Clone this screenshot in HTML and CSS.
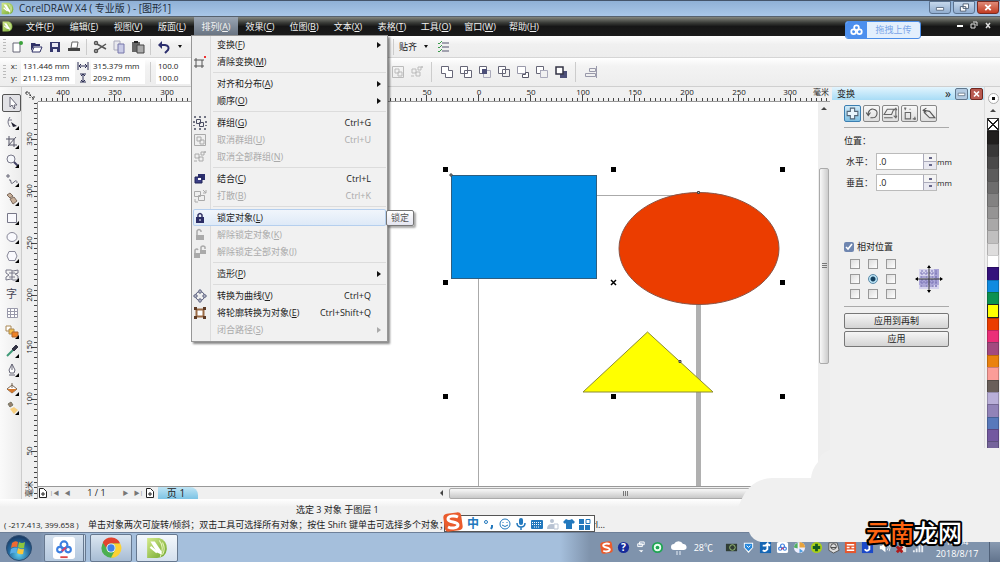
FILE: index.html
```
<!DOCTYPE html>
<html lang="zh-CN">
<head>
<meta charset="utf-8">
<title>CorelDRAW X4 - [图形1]</title>
<link rel="stylesheet" href="styles.css">
</head>
<body>
<svg class="defs" aria-hidden="true">
  <defs>
    <linearGradient id="leaf" x1="0" y1="0" x2="1" y2="1"><stop offset="0" stop-color="#d4ea8c"/><stop offset="1" stop-color="#6fa52a"/></linearGradient>
    <radialGradient id="orb" cx=".5" cy=".75" r=".7"><stop offset="0" stop-color="#5fd0f0"/><stop offset=".6" stop-color="#23679c"/><stop offset="1" stop-color="#1b3c66"/></radialGradient>
    <symbol id="i-group" viewBox="0 0 14 14"><path d="M1 1h2M6 1h2M11 1h2M1 13h2M6 13h2M11 13h2M1 5v2M13 5v2M1 9v1M13 9v1" stroke="currentColor" stroke-width="1.500" fill="none"/><path d="M3.500 3.500h4v4h-4zM6.500 6.500h4v4h-4z" fill="none" stroke="currentColor"/></symbol>
    <symbol id="i-ungroup" viewBox="0 0 14 14"><path d="M1.500 1.500h11v11h-11zM4 4h4v4H4zM7 7h4v4H7z" fill="none" stroke="currentColor"/></symbol>
    <symbol id="i-ungroupall" viewBox="0 0 14 14"><path d="M2 4h4v4H2zM6 7h4v4H6zM8 2h3v3H8zM12 1v2M13 2h-2M1 11h3" fill="none" stroke="currentColor"/></symbol>
    <symbol id="i-baidu" viewBox="0 0 24 24"><g fill="none" stroke-width="3"><circle cx="12" cy="8" r="5" stroke="#3b7fe0"/><circle cx="6" cy="15" r="4" stroke="#3b7fe0"/><circle cx="18" cy="15" r="4" stroke="#3b7fe0"/><path d="M9 17l6-5" stroke="#d9406a"/></g></symbol>
    <symbol id="i-sogou" viewBox="0 0 20 20"><rect x="1" y="1" width="18" height="18" rx="4" fill="#ea5b2c" transform="rotate(-8 10 10)"/><path d="M15 5C11 3 5 4 5 7c0 4 10 2 10 6 0 3-6 4-10 2" fill="none" stroke="#fff" stroke-width="3"/></symbol>
    <symbol id="i-cdr" viewBox="0 0 20 20"><path d="M1 1h11q7 2 7 10-1 8-9 8H1z" fill="url(#leaf)"/><path d="M12 3q5 6 1 15M15 5q3 6 0 11" fill="none" stroke="#e4f3b8"/><path d="M4 4l4 0 6 9v3l-4-2z" fill="#fff"/><path d="M4 9l6 5" stroke="#fff" stroke-width="2"/></symbol>
  </defs>
</svg>
<div class="app">
  <header class="titlebar">
    <svg class="ic13" viewBox="0 0 20 20"><use href="#i-cdr"/></svg>
    <h1>CorelDRAW X4 ( 专业版 ) - [图形1]</h1>
    <div class="winbtns">
      <button aria-label="最小化"><svg viewBox="0 0 22 12"><path d="M7 6h8v3H7z" fill="#fff" stroke="#5a6b80"/></svg></button>
      <button aria-label="还原"><svg viewBox="0 0 22 12"><path d="M10 2h6v5h-6zM7 5h6v5H7z" fill="#fff" stroke="#4a5b70"/></svg></button>
      <button class="close" aria-label="关闭"><svg viewBox="0 0 22 12"><path d="M8 3l6 6M14 3l-6 6" stroke="#fff" stroke-width="2"/></svg></button>
    </div>
  </header>
  <nav class="menubar">
    <svg class="docicon" viewBox="0 0 20 20"><use href="#i-cdr"/></svg>
    <button>文件(<u>F</u>)</button><button>编辑(<u>E</u>)</button><button>视图(<u>V</u>)</button><button>版面(<u>L</u>)</button>
    <div class="open">
      <button class="active">排列(<u>A</u>)</button>
      <div class="menu" role="menu">
        <button><i></i><span>变换(<u>F</u>)</span><b></b></button>
        <button><i><svg class="ic14" viewBox="0 0 14 14"><path d="M3 5h6v6H3zM1 5h2M9 5h2M3 3v2M3 11v2M9 11v2M1 11h2M9 11h2" fill="none" stroke="#555"/><path d="M11 1l2 2M13 1l-2 2" stroke="#e33"/></svg></i><span>清除变换(<u>M</u>)</span></button>
        <hr>
        <button><i></i><span>对齐和分布(<u>A</u>)</span><b></b></button>
        <button><i></i><span>顺序(<u>O</u>)</span><b></b></button>
        <hr>
        <button><i><svg class="ic14"><use href="#i-group"/></svg></i><span>群组(<u>G</u>)</span><kbd>Ctrl+G</kbd></button>
        <button disabled><i><svg class="ic14"><use href="#i-ungroup"/></svg></i><span>取消群组(<u>U</u>)</span><kbd>Ctrl+U</kbd></button>
        <button disabled><i><svg class="ic14"><use href="#i-ungroupall"/></svg></i><span>取消全部群组(<u>N</u>)</span></button>
        <hr>
        <button><i><svg class="ic14" viewBox="0 0 14 14"><path d="M5 2h7v6H5z" fill="#2c2f6e"/><path d="M2 5h7v6H2z" fill="#3b3f86" stroke="#202458"/><path d="M5 6h3v2H5z" fill="#fff"/></svg></i><span>结合(<u>C</u>)</span><kbd>Ctrl+L</kbd></button>
        <button disabled><i><svg class="ic14" viewBox="0 0 14 14"><path d="M1.500 2.500h6v5h-6zM5.500 6.500h6v5h-6zM10 1l3 3M13 1v3h-3M2 10v3h3" fill="none" stroke="currentColor"/></svg></i><span>打散(<u>B</u>)</span><kbd>Ctrl+K</kbd></button>
        <hr>
        <button class="hot"><i><svg class="ic14" viewBox="0 0 14 14"><path d="M5 7V4q2-3 4 0v3" fill="none" stroke="#333366" stroke-width="1.500"/><path d="M3 6h8v6H3z" fill="#2b2d66"/><path d="M7 8v2" stroke="#fff"/></svg></i><span>锁定对象(<u>L</u>)</span></button>
        <button disabled><i><svg class="ic14" viewBox="0 0 14 14"><path d="M4 7V3q2-3 4 0v1" fill="none" stroke="currentColor" stroke-width="1.500"/><path d="M3 7h8v5H3z" fill="currentColor"/></svg></i><span>解除锁定对象(<u>K</u>)</span></button>
        <button disabled><i><svg class="ic14" viewBox="0 0 14 14"><path d="M2 8V5q2-2 3 0M8 5V2q2-2 4 0v2" fill="none" stroke="currentColor" stroke-width="1.500"/><path d="M1 8h6v5H1zM7 5h6v4H7z" fill="currentColor"/></svg></i><span>解除锁定全部对象(<u>J</u>)</span></button>
        <hr>
        <button><i></i><span>造形(<u>P</u>)</span><b></b></button>
        <hr>
        <button><i><svg class="ic14" viewBox="0 0 14 14"><circle cx="7" cy="7" r="4.500" fill="none" stroke="#555a7a"/><path d="M6 1h2v3H6zM6 10h2v3H6zM1 6h3v2H1zM10 6h3v2h-3z" fill="#fff" stroke="#555a7a"/></svg></i><span>转换为曲线(<u>V</u>)</span><kbd>Ctrl+Q</kbd></button>
        <button><i><svg class="ic14" viewBox="0 0 14 14"><path d="M3.500 3.500h7v7h-7z" fill="#fff" stroke="#9a6a45" stroke-width="2"/><path d="M1 1h3v3H1zM10 1h3v3h-3zM1 10h3v3H1zM10 10h3v3h-3z" fill="#5d3b25"/></svg></i><span>将轮廓转换为对象(<u>E</u>)</span><kbd>Ctrl+Shift+Q</kbd></button>
        <button disabled><i></i><span>闭合路径(<u>S</u>)</span><b></b></button>
        <div class="tip" role="tooltip">锁定</div>
      </div>
    </div>
    <button>效果(<u>C</u>)</button><button>位图(<u>B</u>)</button><button>文本(<u>X</u>)</button><button>表格(<u>T</u>)</button><button>工具(<u>O</u>)</button><button>窗口(<u>W</u>)</button><button>帮助(<u>H</u>)</button>
    <div class="docbtns"><svg width="44" height="12" viewBox="0 0 44 12"><path d="M3 6h6" stroke="#fff" stroke-width="2"/><path d="M19 2h4v4M17 4h4v4h-4z" fill="none" stroke="#ddd"/><path d="M32 3l4 5M36 3l-4 5" stroke="#ddd" stroke-width="1.500"/></svg></div>
    <button class="upload"><svg viewBox="0 0 24 24"><g fill="none" stroke="#fff" stroke-width="3"><circle cx="12" cy="8" r="4"/><circle cx="7" cy="15" r="4"/><circle cx="17" cy="15" r="4"/></g></svg><span>拖拽上传</span></button>
  </nav>
  <div class="toolbar">
    <span class="grip"></span>
    <button aria-label="新建"><svg viewBox="0 0 14 14"><path d="M3 3h7v9H3z" fill="#fff" stroke="#667"/><circle cx="11" cy="3" r="2" fill="#3aa23a"/></svg></button>
    <button aria-label="打开"><svg viewBox="0 0 14 14"><path d="M2 3h4l1 1h4v2H5l-3 5z" fill="#2f3166"/><path d="M5 7h8l-2 5H3z" fill="#fff" stroke="#2f3166"/></svg></button>
    <button aria-label="保存"><svg viewBox="0 0 14 14"><path d="M2 2h10v10H2z" fill="#34376b"/><path d="M4 3h6v4H4zM5 9h4v3H5z" fill="#e8e8f2"/></svg></button>
    <button aria-label="打印"><svg viewBox="0 0 14 14"><path d="M5 2h6l-1 6H4z" fill="#fff" stroke="#666"/><path d="M1 8h12v3H1z" fill="#444"/></svg></button>
    <span class="sep"></span>
    <button aria-label="剪切"><svg viewBox="0 0 14 14"><path d="M4 4l9 5M4 10l9-6" stroke="#555" stroke-width="1.500"/><g fill="none" stroke="#555" stroke-width="1.500"><circle cx="3" cy="3" r="1.500"/><circle cx="3" cy="11" r="1.500"/></g></svg></button>
    <button aria-label="复制"><svg viewBox="0 0 14 14"><path d="M2 1h6v9H2z" fill="#e9e9ee" stroke="#aab"/><path d="M6 4h6v9H6z" fill="#c9cbe6" stroke="#77a"/></svg></button>
    <button aria-label="粘贴"><svg viewBox="0 0 14 14"><path d="M1 2h8v10H1z" fill="#666"/><path d="M3 1h4v2H3z" fill="#222"/><path d="M6 5h7v8H6z" fill="#aaa" stroke="#444"/></svg></button>
    <span class="sep"></span>
    <button aria-label="撤销"><svg viewBox="0 0 14 14"><path d="M3 5h5q5 1 3 5l-3 3" fill="none" stroke="#2c2f6e" stroke-width="2"/><path d="M1 5l4-4v8z" fill="#2c2f6e"/></svg></button>
    <span class="caret"></span>
    <span class="behind"><button aria-label="重做" disabled><svg viewBox="0 0 14 14"><path d="M11 5H6Q1 6 3 10l3 3" fill="none" stroke="#bbb" stroke-width="2"/><path d="M13 5L9 1v8z" fill="#bbb"/></svg></button></span>
    <span class="sep"></span>
    <button class="snap">贴齐</button><span class="caret"></span>
    <button aria-label="选项"><svg viewBox="0 0 14 14"><path d="M6 3h7M6 7h7M6 11h7" stroke="#889" stroke-width="1.500"/><path d="M2 3l1 1 3-3M2 7l1 1 3-3M2 11l1 1 3-3" fill="none" stroke="#3a9a4a"/></svg></button>
  </div>
  <div class="props">
    <span class="grip"></span>
    <div class="fields">
      <label for="px">x:</label><input id="px" value="131.446 mm"><label for="pw"><svg viewBox="0 0 12 10"><path d="M1 1v8M11 1v8M2 5h8M4 3L2 5l2 2M8 3l2 2-2 2" fill="none" stroke="#2c2f55"/></svg></label><input id="pw" value="315.379 mm">
      <label for="py">y:</label><input id="py" value="211.123 mm"><label for="ph"><svg viewBox="0 0 12 10"><path d="M3 1h6M3 9h6M6 1v8M4 3l2-2 2 2M4 7l2 2 2-2" fill="none" stroke="#2c2f55"/></svg></label><input id="ph" value="209.2 mm">
    </div>
    <span class="sep"></span>
    <div class="scale"><input aria-label="水平缩放" value="100.0"><input aria-label="垂直缩放" value="100.0"></div>
    <span class="behind2"></span>
    <button disabled aria-label="取消群组"><svg><use href="#i-ungroup"/></svg></button>
    <button disabled aria-label="取消全部群组"><svg><use href="#i-ungroupall"/></svg></button>
    <span class="sep"></span>
    <button aria-label="焊接"><svg viewBox="0 0 14 14"><path d="M1.500 1.500h7v4h4v7h-7v-4h-4z" fill="#fff" stroke="#667"/></svg></button>
    <button aria-label="修剪"><svg viewBox="0 0 14 14"><path d="M1.500 1.500h7v7h-7zM5.500 5.500h7v7h-7z" fill="#fff" stroke="#667"/></svg></button>
    <button aria-label="相交"><svg viewBox="0 0 14 14"><path d="M1.500 1.500h7v7h-7z" fill="#fff" stroke="#667"/><path d="M5.500 5.500h7v7h-7z" fill="none" stroke="#aab"/><path d="M4 4h5v5H4z" fill="#4c4f78"/></svg></button>
    <button aria-label="简化"><svg viewBox="0 0 14 14"><path d="M1.500 1.500h7v7h-7z" fill="#fff" stroke="#667"/><path d="M5.500 4.500h7v7h-7z" fill="none" stroke="#667"/></svg></button>
    <button aria-label="移除后面对象"><svg viewBox="0 0 14 14"><path d="M1.500 1.500h8v7h-8z" fill="#fff" stroke="#99a"/><path d="M9.500 7.500h3v5h-6v-3h3z" fill="#fff" stroke="#556"/></svg></button>
    <button aria-label="移除前面对象"><svg viewBox="0 0 14 14"><path d="M1.500 1.500h7v4h-3v3h-4z" fill="#fff" stroke="#667"/><path d="M5.500 5.500h7v7h-7z" fill="none" stroke="#aab"/></svg></button>
    <button aria-label="边界"><svg viewBox="0 0 14 14"><path d="M6 6h7v7H6z" fill="#4c4f78"/><path d="M2 2h7v7H2z" fill="#fff" stroke="#334" stroke-width="1.500"/></svg></button>
    <span class="sep"></span>
    <button aria-label="对齐"><svg viewBox="0 0 14 14"><path d="M12.500 1v12M5.500 3.500h6v3h-6zM1.500 8.500h10v3h-10z" fill="none" stroke="#99a"/></svg></button>
  </div>
  <main class="work">
    <aside class="toolbox">
      <button class="on" aria-label="挑选"><svg viewBox="0 0 14 14"><path d="M5 1v10l2-2 2 4 1-1-1-3h3z" fill="#fff" stroke="#667"/></svg></button>
      <button class="fly" aria-label="形状"><svg viewBox="0 0 14 14"><path d="M5 1q-4 5 0 10M3 4h4" fill="none" stroke="#778"/><path d="M6 6l6 4-4 1z" fill="#223"/></svg></button>
      <button class="fly" aria-label="裁剪"><svg viewBox="0 0 14 14"><path d="M4 1v9h8M1 4h8v8M3 11l8-9" fill="none" stroke="#556"/></svg></button>
      <button class="fly" aria-label="缩放"><svg viewBox="0 0 14 14"><circle cx="6" cy="5" r="4" fill="#f6f8fc" stroke="#778"/><path d="M9 8l4 4" stroke="#446" stroke-width="2"/></svg></button>
      <button class="fly" aria-label="手绘"><svg viewBox="0 0 14 14"><path d="M1 3h4M3 1v4M4 7q2-1 2 2t3 0 3 1" fill="none" stroke="#667"/></svg></button>
      <button class="fly" aria-label="智能填充"><svg viewBox="0 0 14 14"><path d="M2 3l3-2 3 3-3 2zM5 7l4-2 3 4-4 3z" fill="#c7ae98" stroke="#7d6a5c"/></svg></button>
      <button class="fly" aria-label="矩形"><svg viewBox="0 0 14 14"><path d="M2.500 2.500h9v9h-9z" fill="#f9f9fd" stroke="#778"/></svg></button>
      <button class="fly" aria-label="椭圆"><svg viewBox="0 0 14 14"><ellipse cx="7" cy="7" rx="5" ry="4.500" fill="#f9f9fd" stroke="#889"/></svg></button>
      <button class="fly" aria-label="多边形"><svg viewBox="0 0 14 14"><path d="M4 2.500h6l2 4.500-2 4.500H4L2 7z" fill="#f9f9fd" stroke="#889"/></svg></button>
      <button class="fly" aria-label="基本形状"><svg viewBox="0 0 14 14"><path d="M1 2h5l2 1 5-1v3l-3 1 3 2v4H8l-2-1-5 1V9l3-2-3-2zM4 5h6M4 9h6M7 3v8" fill="none" stroke="#778"/></svg></button>
      <button class="glyph" aria-label="文本">字</button>
      <button aria-label="表格"><svg viewBox="0 0 14 14"><path d="M2.500 2.500h10v9h-10zM2 5.500h10M2 8.500h10M5.500 2v9M9.500 2v9" fill="#fff" stroke="#99a"/></svg></button>
      <button class="fly" aria-label="调和"><svg viewBox="0 0 14 14"><path d="M1 1h5v5H1z" fill="#fff" stroke="#a85"/><path d="M4 4h5v5H4z" fill="#f5c24d" stroke="#a85"/><path d="M7 7h6v5H7z" fill="#ee8226" stroke="#a63"/></svg></button>
      <button class="fly" aria-label="滴管"><svg viewBox="0 0 14 14"><path d="M2 12l6-6" stroke="#3f9a78" stroke-width="2"/><path d="M7 5l4-4 2 2-4 4z" fill="#334" stroke="#334"/></svg></button>
      <button class="fly" aria-label="轮廓"><svg viewBox="0 0 14 14"><path d="M7 1L4 7l1 3h4l1-3-3-6v6M4 12h6" fill="#fff" stroke="#667"/></svg></button>
      <button class="fly" aria-label="填充"><svg viewBox="0 0 14 14"><path d="M2 7l5-4 5 4-5 4z" fill="#fff" stroke="#765"/><path d="M2 7h10l-5 4z" fill="#d4772b"/><path d="M7 1v5" stroke="#765"/></svg></button>
      <button class="fly" aria-label="交互式填充"><svg viewBox="0 0 14 14"><path d="M3 3l3-2 2 3-3 2z" fill="#98816e" stroke="#776"/><path d="M5 8l4-2 4 3-4 4z" fill="#f7cf7f"/></svg></button>
    </aside>
    <section class="editor">
      <svg class="corner" viewBox="0 0 15 15"><path d="M3 6h5v5M8 8l4 4M12 9v3H9M5 4v4" fill="none" stroke="#333" stroke-dasharray="2 1"/></svg>
      <svg class="hruler">
        <defs><pattern id="ht" x="24" y="0" width="52" height="15" patternUnits="userSpaceOnUse"><path d="M.5 8v6M5.500 11v3M10.500 11v3M16.500 11v3M21.500 11v3M26.500 11v3M31.500 11v3M36.500 11v3M42.500 11v3M47.500 11v3" stroke="#444"/></pattern></defs>
        <rect width="100%" height="15" fill="url(#ht)"/>
        <g class="num"><text x="25" y="8">400</text><text x="77" y="8">350</text><text x="129" y="8">300</text><text x="181" y="8">250</text><text x="233" y="8">200</text><text x="285" y="8">150</text><text x="337" y="8">100</text><text x="389" y="8">50</text><text x="441" y="8">0</text><text x="493" y="8">50</text><text x="545" y="8">100</text><text x="597" y="8">150</text><text x="649" y="8">200</text><text x="701" y="8">250</text><text x="752" y="8">300</text><text x="783" y="8">毫米</text></g>
      </svg>
      <svg class="vruler">
        <defs><pattern id="vt" x="0" y="37" width="16" height="52" patternUnits="userSpaceOnUse"><path d="M9 .5h6M12 5.500h3M12 10.500h3M12 16.500h3M12 21.500h3M12 26.500h3M12 31.500h3M12 36.500h3M12 42.500h3M12 47.500h3" stroke="#444"/></pattern></defs>
        <rect width="16" height="100%" fill="url(#vt)"/>
        <g class="num"><text transform="translate(10 37) rotate(-90)">350</text><text transform="translate(10 89) rotate(-90)">300</text><text transform="translate(10 141) rotate(-90)">250</text><text transform="translate(10 193) rotate(-90)">200</text><text transform="translate(10 245) rotate(-90)">150</text><text transform="translate(10 297) rotate(-90)">100</text><text transform="translate(10 349) rotate(-90)">50</text><text transform="translate(10 387) rotate(-90)">毫米</text></g>
      </svg>
      <svg class="canvas" role="img" aria-label="绘图页面">
        <g transform="translate(-38 -102)">
          <path d="M478.500 486V195.500H697" fill="none" stroke="#aaa"/>
          <path d="M696 195h5v800h-5z" fill="#b0b0b0"/><path d="M478.500 480v600" stroke="#aaa"/>
          <rect x="451.500" y="175.500" width="145" height="103" fill="#008be3" stroke="#2d5e80"/>
          <ellipse cx="699" cy="248.500" rx="80" ry="56" fill="#eb3d00" stroke="#8a5547"/>
          <path d="M583 392L647.500 332 713 392z" fill="#ffff00" stroke="#8b8b35"/>
          <path d="M450 174h2v2h-2zM697.500 191.500h2v2h-2zM679 360.500h2v2h-2z" fill="#bbb" stroke="#444"/>
          <path d="M443 167h5v5h-5zM611 167h5v5h-5zM780 167h5v5h-5zM443 280h5v5h-5zM780 280h5v5h-5zM443 394h5v5h-5zM611 394h5v5h-5zM780 394h5v5h-5z"/>
          <path d="M611 280l5 5M616 280l-5 5" stroke="#000" stroke-width="1.500"/>
        </g>
      </svg>
      <div class="vscroll"><span class="up"></span><span class="vthumb"></span></div>
      <div class="pages">
        <svg class="pg" viewBox="0 0 10 12"><path d="M1.500 1.500h4l3 3v6h-7zM3 7h4M5 5v4" fill="#fff" stroke="#222"/></svg>
        <span class="arrow">|◀</span><span class="arrow">◀</span><output>1 / 1</output><span class="arrow">▶</span><span class="arrow">▶|</span>
        <svg class="pg" viewBox="0 0 10 12"><path d="M1.500 1.500h4l3 3v6h-7zM3 7h4M5 5v4" fill="#fff" stroke="#222"/></svg>
        <button class="tab">页 1</button>
        <span class="left"></span><span class="hthumb"></span><span class="right"></span>
      </div>
    </section>
    <aside class="docker">
      <div class="dtitle"><h2>变换</h2><span>»</span><button aria-label="折叠"><svg viewBox="0 0 12 12"><path d="M2 5h8v3H2z" fill="#fff" stroke="#678"/></svg></button><button class="x" aria-label="关闭"><svg viewBox="0 0 12 12"><path d="M3 3l6 6M9 3l-6 6" stroke="#fff" stroke-width="2"/></svg></button></div>
      <div class="dbody">
        <div class="modes">
          <button class="on" aria-label="位置"><svg viewBox="0 0 14 14"><path d="M5 2h4v3h3v4H9v3H5V9H2V5h3z" fill="#e9f5fc" stroke="#567"/></svg></button>
          <button aria-label="旋转"><svg viewBox="0 0 14 14"><path d="M4 8V6q2-4 5-3 4 1 3 5-1 3-4 3H6M2 6l2 3 2-3" fill="none" stroke="#555"/></svg></button>
          <button aria-label="缩放和镜像"><svg viewBox="0 0 14 14"><path d="M4 3h6L8 8H1zM1 11h8M12 2v8M10 4l2-2 1 2M10 9l2 2 1-2" fill="none" stroke="#666"/></svg></button>
          <button aria-label="大小"><svg viewBox="0 0 14 14"><path d="M3 6h5v6H3zM3 2v2M2 2h2M12 13v-3M10 12h3M7 3h1" fill="none" stroke="#666"/></svg></button>
          <button aria-label="倾斜"><svg viewBox="0 0 14 14"><path d="M3 4l5 1 5 6H8L3 6zM5 2L2 4l3 2" fill="none" stroke="#555"/></svg></button>
        </div>
        <h3>位置：</h3>
        <div class="row"><label for="h">水平：</label><span class="spin"><input id="h" value=".0"><button aria-label="微调"></button></span><em>mm</em></div>
        <div class="row"><label for="v">垂直：</label><span class="spin"><input id="v" value=".0"><button aria-label="微调"></button></span><em>mm</em></div>
        <label class="rel"><input type="checkbox" checked>相对位置</label>
        <div class="anchor">
          <div class="grid">
            <input type="checkbox" aria-label="左上"><input type="checkbox" aria-label="上"><input type="checkbox" aria-label="右上">
            <input type="checkbox" aria-label="左"><input type="radio" checked aria-label="中心"><input type="checkbox" aria-label="右">
            <input type="checkbox" aria-label="左下"><input type="checkbox" aria-label="下"><input type="checkbox" aria-label="右下">
          </div>
          <svg width="28" height="28" viewBox="0 0 28 28"><path d="M4 4h20v20H4z" fill="#d6d3ee"/><path d="M4 14h20v6H4zM19 4h5v16h-5z" fill="#aba6d8"/><path d="M5 8h18M5 12h18M5 17h18M5 21h18M7 5v18M11 5v18M17 5v18M21 5v18" stroke="#7a74b5" stroke-dasharray="2 1"/><path d="M14 1v26M1 14h26" stroke="#333"/><path d="M12 3l2-3 2 3zM12 25l2 3 2-3zM3 12l-3 2 3 2zM25 12l3 2-3 2z"/></svg>
        </div>
        <button class="wide">应用到再制</button>
        <button class="wide">应用</button>
      </div>
    </aside>
    <aside class="palette">
      <div class="phead"><span class="play"></span><span class="up"></span></div>
      <div class="swatches"><i class="none"></i><i class="k1"></i><i class="k2"></i><i class="k3"></i><i class="k4"></i><i class="k5"></i><i class="k6"></i><i class="k7"></i><i class="k8"></i><i class="k9"></i><i class="k10"></i><i class="c1"></i><i class="c2"></i><i class="c3"></i><i class="c4"></i><i class="c5"></i><i class="c6"></i><i class="c7"></i><i class="c8"></i><i class="c9"></i><i class="c10"></i><i class="c11"></i><i class="c12"></i><i class="c13"></i><i class="c14"></i><i class="c15"></i><i class="c16"></i><i class="c16"></i><i class="c16"></i><i class="c16"></i></div>
    </aside>
  </main>
  <footer class="status">
    <p class="sel">选定 3 对象 于图层 1</p>
    <p class="hint"><span class="pos">( -217.413, 399.658 )</span><span class="long">单击对象两次可旋转/倾斜；双击工具可选择所有对象；按住 Shift 键单击可选择多个对象；按住 Alt 键单击可进行挖掘；按住 Ctrl 并单击可在组中进行选择</span></p>
    <div class="ime">
      <svg class="s" viewBox="0 0 20 20"><use href="#i-sogou"/></svg>
      <b>中</b>
      <svg viewBox="0 0 12 12"><circle cx="3" cy="4" r="1.500" fill="none" stroke="#2278bd"/><path d="M9 7v2l-1 2" stroke="#2278bd" stroke-width="2" fill="none"/></svg>
      <svg viewBox="0 0 12 12"><circle cx="6" cy="6" r="5" fill="none" stroke="#2278bd"/><path d="M4 4v1M8 4v1M3 7q3 3 6 0" fill="none" stroke="#2278bd"/></svg>
      <svg viewBox="0 0 12 12"><rect x="4" y="0" width="4" height="7" rx="2" fill="#2278bd"/><path d="M2 5q0 4 4 4t4-4M6 9v3" fill="none" stroke="#2278bd" stroke-width="1.500"/></svg>
      <svg viewBox="0 0 12 12"><rect y="2" width="12" height="9" rx="1" fill="#2278bd"/><path d="M1 4.500h10M1 6.500h10M3 9h6" stroke="#fff" stroke-dasharray="1 1"/></svg>
      <svg viewBox="0 0 12 12"><circle cx="5" cy="3" r="2" fill="#b9c3d3"/><path d="M0 11q0-5 5-5t5 5z" fill="#b9c3d3"/><path d="M7 6h4v5H7z" fill="#fff" stroke="#b9c3d3"/></svg>
      <svg viewBox="0 0 12 12"><path d="M3 1q3 2 6 0l3 3-2 2-1-1v6H3V5L2 6 0 4z" fill="#2278bd"/></svg>
      <svg viewBox="0 0 12 12"><path d="M0 1h5v5H0zM0 7h5v5H0zM6 7h5v5H6z" fill="#2278bd"/><path d="M7 1.500h4v4H7z" fill="#fff" stroke="#2278bd"/></svg>
    </div>
  </footer>
  <div class="taskbar">
    <button class="start" aria-label="开始"><svg viewBox="0 0 28 28"><circle cx="14" cy="14" r="12.500" fill="url(#orb)" stroke="#2c4c70"/><path d="M7 9q3-3 6-1l-1 5q-3-1-6 1z" fill="#ee6a32"/><path d="M14 8q3 2 6 0l-1 6q-3 1-6-1z" fill="#8cc63e"/><path d="M6 15q3-2 6-1l-1 5q-3-1-6 1z" fill="#58aee8"/><path d="M13 14q3 2 6 1l-1 5q-3 1-6-1z" fill="#fbc73a"/></svg></button>
    <button class="task stack" aria-label="百度网盘"><svg viewBox="0 0 24 24"><rect x="0" y="0" width="24" height="24" rx="3" fill="#fff"/><use href="#i-baidu" x="3" y="2" width="18" height="19"/><path d="M8 22h8" stroke="#d44" stroke-width="2"/></svg></button>
    <button class="task" aria-label="Chrome"><svg viewBox="0 0 24 24"><circle cx="12" cy="12" r="10.500" fill="#4caf50"/><path d="M3 6A10.500 10.500 0 0 1 22 7H12a5 5 0 0 0-5 5z" fill="#e2432f"/><path d="M22 7a10.500 10.500 0 0 1-10 15.500L16 15a5 5 0 0 0-4-8z" fill="#fdd233"/><circle cx="12" cy="12" r="5" fill="#fff"/><circle cx="12" cy="12" r="4" fill="#3f82e8"/></svg></button>
    <button class="task now" aria-label="CorelDRAW"><svg viewBox="0 0 20 20"><use href="#i-cdr"/></svg></button>
    <div class="tray">
      <svg viewBox="0 0 14 14"><use href="#i-sogou"/></svg>
      <svg viewBox="0 0 14 14"><circle cx="7" cy="7" r="6" fill="#162a9a"/><text x="7" y="11" text-anchor="middle" class="q">?</text></svg>
      <svg viewBox="0 0 14 14"><path d="M6 1h5v3H6zM4 3h5v3H4z" fill="#8da2bd" stroke="#fff"/><path d="M5 10h5l-2 2z" fill="#fff"/></svg>
      <svg viewBox="0 0 14 14"><circle cx="7" cy="7" r="5" fill="#e8fff0" stroke="#1fa553" stroke-width="2"/><circle cx="7" cy="7" r="2" fill="#1fa553"/></svg>
      <svg class="cloud" viewBox="0 0 18 16"><path d="M4 10a3 3 0 0 1 0-6 5 5 0 0 1 9 0 3 3 0 0 1 1 6z" fill="#fff"/><path d="M7 11v4M10 11v4" stroke="#e7eef7"/></svg>
      <span class="temp">28℃</span>
      <svg viewBox="0 0 14 14"><path d="M1 3h12v8H1z" fill="#2f3d35"/><circle cx="8" cy="7" r="3" fill="none" stroke="#9dc47c"/></svg>
      <svg viewBox="0 0 14 14"><path d="M2 2h10v5l-5 6-5-6z" fill="#fff"/><path d="M3 3h8v4l-4 4-4-4z" fill="#2788dc"/><path d="M5 5l2 2 2-2" stroke="#fff" fill="none"/></svg>
      <svg viewBox="0 0 14 14"><path d="M1 1h12v12H1z" fill="#1465b4"/><path d="M4 5h3l2-2v6q-2 3-5 1M9 3l3 2" fill="none" stroke="#fff" stroke-width="2"/></svg>
      <svg viewBox="0 0 14 14"><rect x="1" y="1" width="12" height="12" rx="2" fill="#fff"/><use href="#i-baidu" x="2" y="2" width="10" height="10"/></svg>
      <svg viewBox="0 0 14 14"><circle cx="7" cy="7" r="6" fill="#eef"/><path d="M7 1a6 6 0 0 1 6 6H7z" fill="#e8a33c"/><path d="M1 7a6 6 0 0 1 4-5v6z" fill="#50b060"/><path d="M7 8l4 3-4 2z" fill="#4a9ee0"/></svg>
      <svg viewBox="0 0 14 14"><circle cx="7" cy="7" r="6" fill="#a9d018"/><path d="M7 3v8M3 7h8" stroke="#155c20" stroke-width="3"/></svg>
      <svg viewBox="0 0 14 14"><path d="M2 2h9l2 8-6 3-5-3z" fill="#ddd" stroke="#555"/><circle cx="7" cy="6" r="3" fill="none" stroke="#444"/><path d="M4 7h6" stroke="#444"/></svg>
      <svg viewBox="0 0 14 14"><path d="M1 1h12v12H1z" fill="#e4572e"/><path d="M3 4h8M3 7h3M8 7h3M3 10h8" stroke="#fff" stroke-width="1.500"/></svg>
      <svg viewBox="0 0 14 14"><path d="M1 1h12v12H1z" fill="#1b49c8"/><path d="M9 3v6q-3 3-5 0" fill="none" stroke="#fff" stroke-width="2"/></svg>
      <svg viewBox="0 0 14 14"><path d="M2 5h2l4-3v10L4 9H2z" fill="#fff"/><path d="M10 4q2 3 0 6M12 3q2 4 0 8" fill="none" stroke="#eee"/></svg>
      <svg viewBox="0 0 14 14"><path d="M7 4h5v8H7z" fill="#ddd"/><path d="M2 6l6 6M8 6l-6 6" stroke="#b01b1b" stroke-width="3"/></svg>
      <svg viewBox="0 0 14 14"><path d="M2 10v2M5 8v4M8 5v7M11 2v10" stroke="#e6ebf2" stroke-width="2"/></svg>
      <time><span>15:04</span><span>2018/8/17</span></time>
      <button class="peek" aria-label="显示桌面"></button>
    </div>
  </div>
  <svg class="mark" viewBox="0 0 265 118">
    <path d="M265 4H103Q86 6 83 18q-6 7-7 16H37Q14 35 5 59q-4 9-13 9v20H14q3 8 12 10h239z" fill="#f0f0f0"/>
    <text x="131" y="98"><tspan fill="#ff6410">云南</tspan><tspan fill="#fff">龙网</tspan></text>
  </svg>
</div>
</body>
</html>
```
FILE: styles.css
```
* { box-sizing: border-box; }
body { margin: 0; font: 9px/12px "Open Sans", "Noto Sans CJK SC", sans-serif; color: #222; background: #f0f0f0; }
button, input { font: inherit; color: inherit; padding: 0; border: 0; background: none; }
h1, h2, h3, p { margin: 0; font: inherit; }
u { text-underline-offset: 1px; }
.defs { position: absolute; width: 0; height: 0; }
.app { position: relative; display: flex; flex-direction: column; height: 100vh; overflow: hidden; }

.titlebar { display: flex; align-items: center; gap: 5px; height: 17px; padding-left: 1px; flex: none; background: linear-gradient(#8fb0d6, #a9c7e8); border-top: 1px solid #44546a; border-bottom: 1px solid #56616e; }
.titlebar h1 { flex: 1; font-size: 10px; line-height: 12px; padding-bottom: 2px; color: #222c3a; }
.ic13 { width: 13px; height: 13px; }
.ic14 { width: 14px; height: 14px; }
.winbtns { display: flex; gap: 2px; padding-right: 1px; align-self: flex-start; }
.winbtns button { width: 22px; height: 13px; border: 1px solid #5c7390; border-radius: 0 0 3px 3px; background: linear-gradient(#c6d8ec, #91adcf); }
.winbtns svg { display: block; width: 100%; height: 11px; }
.winbtns .close { border-color: #7a2a20; background: linear-gradient(#e08a78, #c23c22); }

.menubar { position: relative; display: flex; align-items: stretch; height: 19px; flex: none; color: #f2f2f2; background: linear-gradient(#85877f 0, #3a3c38 30%, #161616 50%, #1c1c1c); }
.menubar > button, .active { min-width: 44px; height: 19px; text-align: center; white-space: nowrap; }
.docicon { width: 11px; height: 11px; margin: 4px 5px 0 2px; }
.active { display: block; background: linear-gradient(#9aa5b3, #66717f); }
.open { position: relative; margin: 0; }
.docbtns { margin-left: auto; padding: 3px 2px 0 0; }
.menubar .upload { position: absolute; z-index: 5; right: 79px; top: 4px; display: flex; align-items: center; width: 76px; height: 18px; border: 1px solid #4c8ee8; border-radius: 3px; background: #e3effd; color: #7aa5e8; overflow: hidden; }
.upload svg { width: 21px; height: 18px; padding: 2px; background: #4c8fee; }
.upload span { flex: 1; }

.menu { position: absolute; z-index: 10; left: -3px; top: 18px; width: 197px; padding: 0 1px 3px; color: #222; background: linear-gradient(90deg, #efefef 18px, #dcdcdc 18px, #dcdcdc 19px, #f1f1f1 19px); border: 1px solid #979797; box-shadow: 2px 2px 2px #0007; }
.menu > button { display: flex; align-items: center; width: 100%; height: 17px; text-align: left; }
.menu i { width: 16px; height: 14px; margin-right: 8px; color: #4a4d62; }
.menu svg { display: block; }
.menu span { flex: 1; white-space: nowrap; }
.menu kbd { font: inherit; padding-right: 15px; }
.menu b { border: 3px solid transparent; border-left: 4px solid #111; border-right: 0; margin-right: 5px; }
.menu hr { height: 1px; margin: 2px 0 2px 20px; border: 0; background: #dcdcdc; }
.menu button:disabled, .menu button:disabled i { color: #aaa; }
.menu button:disabled b { border-left-color: #aaa; }
.menu .hot { border-radius: 2px; background: linear-gradient(#f2f6fc, #dde9f7); box-shadow: inset 0 0 0 1px #b5cfee; }
.tip { position: absolute; left: 194px; top: 174px; padding: 1px 4px; border: 1px solid #777; border-radius: 2px; background: linear-gradient(#fff, #e4e5f0); color: #555; white-space: nowrap; box-shadow: 2px 2px 2px #0005; }

.toolbar { display: flex; align-items: center; height: 22px; flex: none; padding-left: 3px; background: linear-gradient(#fff, #f0f0f0 40%, #ededed); border-bottom: 1px solid #d5d5d5; }
.toolbar button, .props > button { width: 19px; height: 16px; }
.toolbar button svg, .props > button svg { display: block; width: 14px; height: 14px; margin: 0 auto; }
.toolbar .snap { width: 22px; }
.grip { width: 3px; height: 15px; margin-right: 1px; background: repeating-linear-gradient(#bbb 0 1px, transparent 1px 3px); }
.sep { width: 1px; height: 16px; margin: 0 3px; background: #ccc; }
.caret { border: 2px solid transparent; border-top: 3px solid #111; border-bottom: 0; margin: 0 5px; }
.behind { width: 203px; }

.props { display: flex; align-items: center; height: 29px; flex: none; padding-left: 3px; background: linear-gradient(#fff, #f3f3f3 30%, #ededed); border-bottom: 1px solid #cfcfcf; }
.fields { display: grid; grid-template-columns: 14px 54px 16px 54px; grid-auto-rows: 12px; align-items: center; font-size: 8px; }
.fields label { text-align: center; }
.fields svg { display: block; width: 12px; height: 10px; margin: 0 auto; }
.props input { width: 100%; height: 12px; padding-left: 2px; background: #fff; }
.props .sep { height: 20px; margin: 0 5px; }
.scale { width: 34px; font-size: 8px; }
.scale input { display: block; }
.behind2 { width: 198px; }
.props button:disabled { color: #bbb; }

.work { flex: 1; min-height: 0; display: flex; background: #f0f0f0; }
.toolbox { width: 22px; flex: none; padding: 7px 2px 0; border-right: 1px solid #ccc; background: linear-gradient(90deg, #fafafa, #ececec); }
.toolbox button { position: relative; display: block; width: 19px; height: 19px; }
.toolbox svg { display: block; width: 14px; height: 14px; margin: 0 auto; }
.toolbox .on { height: 18px; margin-bottom: 1px; border: 1px solid #555; border-radius: 2px; background: #e2e2e6; }
.toolbox .fly::after { content: ""; position: absolute; right: 2px; bottom: 2px; border: 2px solid #000; border-left-color: transparent; border-top-color: transparent; }
.toolbox .glyph { font-size: 11px; line-height: 16px; color: #445; }

.editor { flex: 1; min-width: 0; display: grid; grid-template: 15px 1fr 13px / 16px 1fr 12px; }
.corner { width: 15px; height: 15px; }
.hruler { grid-column: 2 / 4; width: 100%; height: 15px; border-bottom: 1px solid #999; }
.vruler { grid-row: 2 / 4; width: 16px; height: 100%; border-right: 1px solid #999; }
.num { font-size: 8px; text-anchor: middle; fill: #222; }
.canvas { width: 100%; height: 100%; background: #fff; }
.vscroll { display: flex; flex-direction: column; align-items: center; background: #eee; }
.up { border: 3px solid transparent; border-bottom: 3px solid #444; border-top: 0; margin: 5px 0; }
.vthumb { width: 10px; height: 51%; margin-top: 53px; border: 1px solid #aaa; border-radius: 2px; background: repeating-linear-gradient(#777 0 1px, transparent 1px 2px) center / 5px 6px no-repeat, linear-gradient(90deg, #f8f8f8, #ccc); }
.pages { grid-column: 2 / 4; display: flex; align-items: center; border-top: 1px solid #999; background: #f0f0f0; }
.pg { width: 10px; height: 12px; }
.arrow { width: 13px; text-align: center; color: #777; font-size: 6px; white-space: nowrap; }
.pages output { width: 45px; text-align: center; font-size: 9px; }
.pages .arrow, .pages output { flex: none; }
.tab { width: 40px; height: 12px; margin-left: 3px; padding-right: 4px; border-radius: 0 8px 0 0; background: linear-gradient(#bfe4f4, #7cc3e4); font-size: 10px; line-height: 12px; }
.left { margin-left: auto; border: 3px solid transparent; border-right: 3px solid #444; border-left: 0; margin-right: 6px; }
.hthumb { flex: 0 1 354px; height: 11px; border: 1px solid #aaa; border-radius: 2px; background: repeating-linear-gradient(90deg, #777 0 1px, transparent 1px 2px) center / 6px 5px no-repeat, linear-gradient(#f8f8f8, #c8c8c8); }
.right { width: 27px; }

.docker { width: 152px; flex: none; margin-left: 2px; }
.dtitle { display: flex; align-items: center; gap: 2px; height: 13px; padding: 0 1px 0 5px; background: linear-gradient(#e2f4fd, #a8dcf6); }
.dtitle h2 { flex: 1; }
.dtitle span { font-size: 12px; margin-right: 2px; }
.dtitle button { width: 13px; height: 12px; border: 1px solid #60788e; border-radius: 2px; background: #b3cbe2; }
.dtitle .x { background: #b85a50; border-color: #702820; }
.dtitle svg { display: block; width: 11px; height: 10px; }
.dbody { display: flex; flex-direction: column; padding: 5px 35px 0 12px; }
.modes { display: flex; gap: 2px; padding-bottom: 5px; border-bottom: 1px solid #aaa; }
.modes button { width: 17px; height: 17px; border: 1px solid #888; border-radius: 2px; background: linear-gradient(#f8f8f8, #ddd); }
.modes .on { border-color: #3c7fb1; background: linear-gradient(#cfeaf8, #7fbfe2); }
.modes svg { display: block; width: 15px; height: 15px; }
.dbody h3 { margin: 7px 0 6px; }
.row { display: flex; align-items: center; height: 17px; margin-bottom: 4px; white-space: nowrap; }
.row label { width: 32px; flex: none; padding-left: 2px; }
.row em { font-style: normal; font-size: 8px; }
.spin { display: flex; width: 61px; height: 17px; flex: none; border: 1px solid #bbb; background: #fff; }
.spin input { width: 46px; padding-left: 2px; }
.spin button { width: 13px; border-left: 1px solid #aab; background: linear-gradient(transparent 3px, #668 3px 5px, transparent 5px 10px, #668 10px 12px, transparent 12px) center / 3px 100% no-repeat, linear-gradient(#f4f4f4 7px, #aab 7px 8px, #e8e8f0 8px); }
.rel { display: flex; align-items: center; gap: 2px; height: 14px; margin-top: 45px; }
.rel input { width: 10px; height: 10px; margin: 0 1px 0 0; accent-color: #6f86b0; }
.anchor { display: flex; align-items: center; justify-content: space-between; padding: 5px 6px 7px; border-bottom: 1px solid #aaa; }
.grid { display: grid; grid-template-columns: repeat(3, 10px); gap: 5px 8px; }
.grid input { appearance: none; width: 10px; height: 10px; margin: 0; border: 1px solid #999; background: linear-gradient(135deg, #ddd, #fff); }
.grid input[type="radio"] { border-radius: 50%; border-color: #5b8aa8; background: radial-gradient(#14405e 2px, #b9e2f5 3px); }
.wide { height: 16px; margin-top: 2px; border: 1px solid #777; border-radius: 2px; background: linear-gradient(#f6f6f6, #d4d4d4); }
.anchor + .wide { margin-top: 6px; }

.palette { width: 16px; flex: none; display: flex; flex-direction: column; padding: 0 1px 8px 2px; background: #f0f0f0; border-left: 1px solid #ddd; }
.phead { display: flex; flex-direction: column; align-items: center; height: 31px; padding-top: 6px; }
.play { width: 11px; height: 11px; flex: none; border: 1px solid #aaa; border-radius: 50%; background: linear-gradient(#111, #111) center / 3px 3px no-repeat, #fff; }
.swatches { flex: 1; display: flex; flex-direction: column; }
.swatches i { flex: 1; border: 1px solid #0003; border-bottom: 0; }
.none { background: linear-gradient(45deg, transparent 47%, #222 47% 53%, transparent 53%), linear-gradient(-45deg, transparent 47%, #222 47% 53%, transparent 53%), #fff; }
.swatches .none { border: 1px solid #333; }
.k1 { background: #211f1e; } .k2 { background: #393838; } .k3 { background: #4a4949; } .k4 { background: #5d5c5c; } .k5 { background: #6e6d6d; }
.k6 { background: #838282; } .k7 { background: #959494; } .k8 { background: #a9a8a8; } .k9 { background: #c0bfbf; } .k10 { background: #dedddd; }
.c1 { background: #fff; } .c2 { background: #34127c; } .c3 { background: #108be0; } .c4 { background: #0c9150; }
.swatches .c5 { background: #ffff00; border: 1px solid #222; }
.c6 { background: #eb3d00; } .c7 { background: #eb2f78; } .c8 { background: #a34a80; } .c9 { background: #ea820f; } .c10 { background: #fb9d98; }
.c11 { background: #6a5f5a; } .c12 { background: #b9afd8; } .c13 { background: #9183b8; } .c14 { background: #5879bb; } .c15 { background: #7359a0; } .c16 { background: #75649b; }

.status { position: relative; height: 33px; flex: none; padding: 3px 4px; background: linear-gradient(#fff, #f0f0f0 8px); line-height: 15px; }
.sel { padding-left: 292px; }
.hint { display: flex; gap: 8px; max-width: 603px; white-space: nowrap; }
.hint .pos { flex: none; width: 76px; font-size: 8px; }
.hint .long { flex: 1; min-width: 0; overflow: hidden; text-overflow: ellipsis; }
.ime { position: absolute; left: 444px; bottom: 0; display: flex; align-items: center; justify-content: space-between; width: 151px; height: 17px; padding-right: 3px; border: 1px solid #555; background: #fff; }
.ime svg { width: 12px; height: 12px; }
.ime .s { width: 20px; height: 20px; margin: -4px 0 0 -2px; }
.ime b { font-size: 12px; color: #2278bd; }

.taskbar { display: flex; align-items: center; gap: 4px; height: 30px; flex: none; padding-left: 5px; background: linear-gradient(90deg, #7f93ae 0 40px, #a5bfdc 60px 560px, #7f93ac 590px); border-top: 1px solid #6e8099; }
.start { width: 28px; height: 28px; margin-right: 7px; }
.start svg { display: block; width: 28px; height: 28px; }
.task { width: 42px; height: 28px; border: 1px solid #66788f; border-radius: 2px; background: linear-gradient(#dbe6f1, #a7bcd4); }
.task.now { background: linear-gradient(#f4f8fc, #d4e0ee); }
.task.stack { border-right-width: 3px; border-right-style: double; background: linear-gradient(#d5e1ee, #b4c8de); }
.task svg { display: block; width: 22px; height: 22px; margin: 0 auto; }
.tray { display: flex; align-items: center; align-self: stretch; gap: 4px; margin-left: auto; color: #fff; }
.tray svg { width: 13px; height: 13px; }
.tray .cloud { width: 18px; height: 16px; margin: 0 2px; }
.temp { margin-right: 8px; }
.q { font: bold 11px "Open Sans", sans-serif; fill: #fff; }
.tray time { display: flex; flex-direction: column; align-items: center; width: 56px; line-height: 12px; }
.peek { width: 11px; align-self: stretch; border-left: 1px solid #4f6078; background: linear-gradient(#9bacc2, #61738c); }
.mark { position: absolute; right: 0; bottom: 0; width: 265px; height: 118px; pointer-events: none; overflow: visible; }
.mark text { font: 500 24px "Noto Sans CJK SC", sans-serif; stroke: #000; stroke-width: 4px; stroke-linejoin: round; paint-order: stroke; }
```
